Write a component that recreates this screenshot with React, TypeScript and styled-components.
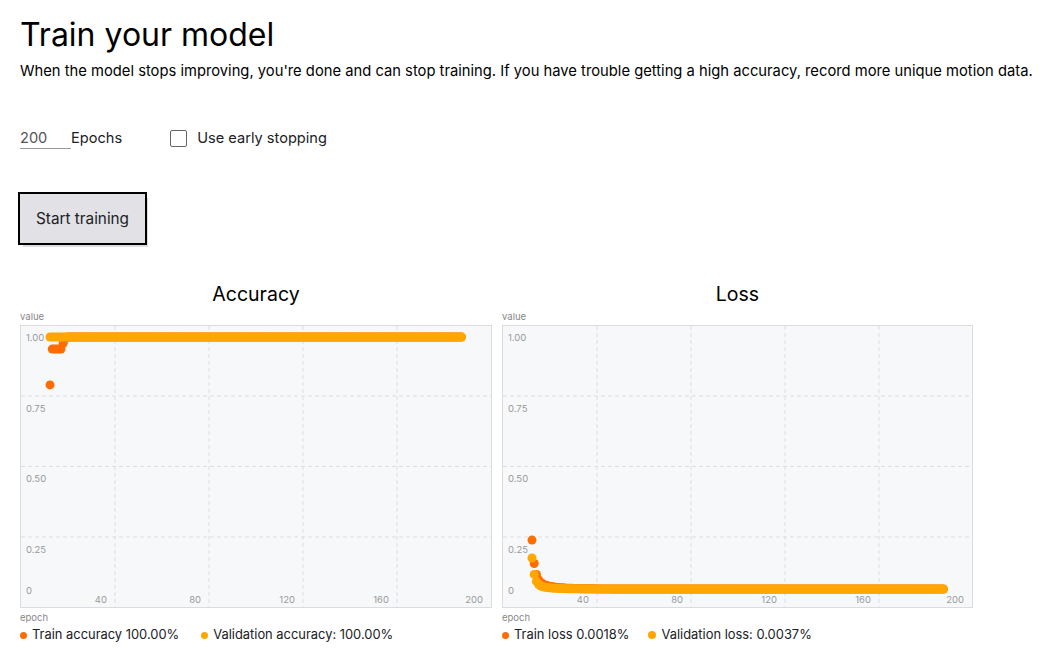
import React from "react";
import styled, { createGlobalStyle } from "styled-components";

const FONT = `Inter, Roboto, "Open Sans", Arial, sans-serif`;

const Global = createGlobalStyle`
  html, body { margin: 0; padding: 0; background: #ffffff; }
  body { font-family: ${FONT}; color: #202124; }
`;

const Page = styled.main`
  padding: 16px 20px 0 20px;
  display: flex;
  flex-direction: column;
`;

const Title = styled.h1`
  margin: 0;
  font-size: 32px;
  line-height: 38px;
  font-weight: 400;
  color: #000;
`;

const Subtitle = styled.p`
  margin: 7px 0 0 0;
  font-size: 14.75px;
  line-height: 20px;
  color: #000;
`;

const Controls = styled.div`
  margin-top: 45px;
  display: flex;
  align-items: center;
  height: 24px;
`;

const EpochInput = styled.div`
  width: 51px;
  height: 22px;
  box-sizing: border-box;
  border-bottom: 1px solid #9a9a9a;
  font-size: 14.6px;
  line-height: 22px;
  color: #555;
`;

const Label = styled.span`
  font-size: 14.6px;
  color: #202124;
`;

const CheckRow = styled.label`
  margin-left: 48px;
  display: flex;
  align-items: center;
  gap: 10px;
`;

const Box = styled.span`
  width: 17px;
  height: 17px;
  box-sizing: border-box;
  border: 1px solid #666;
  border-radius: 2px;
  background: #fff;
`;

const Button = styled.button`
  margin-top: 44px;
  align-self: flex-start;
  width: 125px;
  height: 49px;
  background: #e2e1e6;
  border: none;
  outline: 2px solid #000;
  box-shadow: 3px 4px 0 #dddce1;
  font-family: ${FONT};
  font-size: 15.3px;
  color: #202124;
  text-align: left;
  padding: 0 0 0 16px;
`;

const Charts = styled.section`
  margin-top: 39px;
  display: flex;
  gap: 10px;
`;

const ChartCol = styled.div<{ $w: number }>`
  width: ${(p) => p.$w}px;
  display: flex;
  flex-direction: column;
`;

const ChartTitle = styled.div`
  text-align: center;
  font-size: 19.5px;
  line-height: 24px;
  color: #000;
`;

const AxisName = styled.div<{ $top: number }>`
  margin-top: ${(p) => p.$top}px;
  font-size: 9.5px;
  line-height: 12px;
  color: #888;
`;

const Plot = styled.svg`
  display: block;
  margin-top: 2px;
  font-family: ${FONT};
`;

const Legend = styled.div<{ $gap: number }>`
  margin-top: 3px;
  display: flex;
  gap: ${(p) => p.$gap}px;
  font-size: 12.9px;
  line-height: 16px;
  color: #202124;
`;

const LegendItem = styled.span`
  display: flex;
  align-items: center;
  gap: 5px;
`;

const Dot = styled.span<{ $c: string; $s: number }>`
  width: ${(p) => p.$s}px;
  height: ${(p) => p.$s}px;
  border-radius: 50%;
  background: ${(p) => p.$c};
`;

const TRAIN = "#ff6d00";
const VAL = "#ffa600";
const N = 188;
const H = 283;
const yOf = (v: number) => 264 - 252 * v;
const xOf = (i: number) => 30 + i * 2.2;

const accTrain = Array.from({ length: N }, (_, i) => {
  if (i === 0) return 0.81;
  if (i <= 5) return 0.952;
  if (i === 6) return 0.975;
  if (i === 7) return 0.993;
  return 1;
});
const accVal = Array.from({ length: N }, () => 1);
const lossTrain = Array.from(
  { length: N },
  (_, i) => 0.16 * Math.exp(-0.8 * i) + 0.034 * Math.exp(-i / 7)
);
const lossVal = Array.from(
  { length: N },
  (_, i) => 0.105 * Math.exp(-0.9 * i) + 0.018 * Math.exp(-i / 6)
);

const yLabels: [string, number][] = [
  ["1.00", 16],
  ["0.75", 87],
  ["0.50", 157],
  ["0.25", 228],
  ["0", 269],
];
const hGrid = [71, 141.5, 212];
const vGrid = [95, 189, 283, 377];
const xLabels = ["40", "80", "120", "160", "200"];

function Chart({ w, series }: { w: number; series: [number[], string][] }) {
  const xl = [...vGrid, w - 1];
  return (
    <Plot width={w} height={H} viewBox={`0 0 ${w} ${H}`}>
      <rect x={0.5} y={0.5} width={w - 1} height={H - 1} fill="#f7f8fa" stroke="#dcdce0" />
      {hGrid.map((y) => (
        <line key={y} x1={1} x2={w - 1} y1={y} y2={y} stroke="#dedee2" strokeDasharray="4 3" />
      ))}
      {vGrid.map((x) => (
        <line key={x} x1={x} x2={x} y1={1} y2={H - 1} stroke="#dedee2" strokeDasharray="4 3" />
      ))}
      {yLabels.map(([t, y]) => (
        <text key={t} x={6} y={y} fontSize={9.5} fill="#999">
          {t}
        </text>
      ))}
      {xLabels.map((t, i) => (
        <text key={t} x={xl[i] - 8} y={278} fontSize={9.5} fill="#999" textAnchor="end">
          {t}
        </text>
      ))}
      {series.map(([data, c]) =>
        data.map((v, i) => <circle key={c + i} cx={xOf(i)} cy={yOf(v)} r={4.5} fill={c} />)
      )}
    </Plot>
  );
}

export default function App() {
  return (
    <>
      <Global />
      <Page>
        <Title>Train your model</Title>
        <Subtitle>
          When the model stops improving, you're done and can stop training. If you have trouble getting a high
          accuracy, record more unique motion data.
        </Subtitle>
        <Controls>
          <EpochInput>200</EpochInput>
          <Label>Epochs</Label>
          <CheckRow>
            <Box />
            <Label>Use early stopping</Label>
          </CheckRow>
        </Controls>
        <Button>Start training</Button>
        <Charts>
          <ChartCol $w={472}>
            <ChartTitle>Accuracy</ChartTitle>
            <AxisName $top={5}>value</AxisName>
            <Chart w={472} series={[[accTrain, TRAIN], [accVal, VAL]]} />
            <AxisName $top={4}>epoch</AxisName>
            <Legend $gap={22}>
              <LegendItem>
                <Dot $c={TRAIN} $s={7} />
                Train accuracy 100.00%
              </LegendItem>
              <LegendItem>
                <Dot $c={VAL} $s={7} />
                Validation accuracy: 100.00%
              </LegendItem>
            </Legend>
          </ChartCol>
          <ChartCol $w={471}>
            <ChartTitle>Loss</ChartTitle>
            <AxisName $top={5}>value</AxisName>
            <Chart w={471} series={[[lossTrain, TRAIN], [lossVal, VAL]]} />
            <AxisName $top={4}>epoch</AxisName>
            <Legend $gap={19}>
              <LegendItem>
                <Dot $c={TRAIN} $s={7} />
                Train loss 0.0018%
              </LegendItem>
              <LegendItem>
                <Dot $c={VAL} $s={8} />
                Validation loss: 0.0037%
              </LegendItem>
            </Legend>
          </ChartCol>
        </Charts>
      </Page>
    </>
  );
}
